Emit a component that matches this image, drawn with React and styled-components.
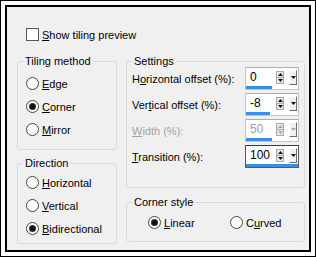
import React from 'react';
import styled, { createGlobalStyle } from 'styled-components';

const GlobalStyle = createGlobalStyle`
  html, body {
    margin: 0;
    padding: 0;
    background: #fff;
  }
  body {
    font-family: "Liberation Sans", Arial, sans-serif;
    font-size: 11px;
    color: #000;
  }
`;

const Frame = styled.div`
  width: 316px;
  height: 257px;
  box-sizing: border-box;
  border: 1px solid #000;
  padding: 4px;
  background: #fff;
`;

const Panel = styled.div`
  height: 100%;
  box-sizing: border-box;
  border: 2px solid #000;
  background: #f0f0f0;
  padding: 21px 4px 0 10px;
  display: flex;
  flex-direction: column;
`;

const CheckRow = styled.label`
  display: flex;
  align-items: center;
  gap: 3px;
  height: 13px;
  margin-left: 9px;
`;

const CheckBox = styled.span`
  width: 13px;
  height: 13px;
  box-sizing: border-box;
  border: 1px solid #555;
  background: #fff;
`;

const Columns = styled.div`
  display: grid;
  grid-template-columns: 100px 179px;
  column-gap: 9px;
  margin-top: 14px;
`;

const Column = styled.div`
  display: flex;
  flex-direction: column;
  gap: ${p => p.$gap}px;
`;

const Group = styled.fieldset`
  margin: 0;
  padding: 0;
  min-width: 0;
  border: 1px solid #d5dbe0;
  border-radius: 3px;
`;

const Legend = styled.legend`
  margin-left: 5px;
  padding: 0 2px;
  line-height: 12px;
`;

const GroupBody = styled.div`
  padding: ${p => p.$pad};
  display: ${p => (p.$inline ? 'grid' : 'block')};
  grid-template-columns: 82px 1fr;
`;

const RadioRow = styled.div`
  display: flex;
  align-items: center;
  gap: 3px;
  height: 23px;
`;

const RadioCircle = styled.span`
  width: 13px;
  height: 13px;
  box-sizing: border-box;
  border: 1px solid #444;
  border-radius: 50%;
  background: #fff;
  display: flex;
  align-items: center;
  justify-content: center;
`;

const RadioDot = styled.span`
  width: 5px;
  height: 5px;
  border-radius: 50%;
  background: #111;
  box-shadow: 0 0 0 1px #333;
`;

const SettingRow = styled.div`
  display: grid;
  grid-template-columns: 1fr 54px;
  align-items: center;
  height: 22px;
  margin-bottom: 4px;
  color: ${p => (p.$disabled ? '#a3a3a3' : '#000')};
`;

const SpinBox = styled.div`
  box-sizing: border-box;
  width: 54px;
  height: 23px;
  border: 1px solid ${p => (p.$focused ? '#5a5a5a' : '#c2c5ca')};
  border-top-color: ${p => (p.$focused ? '#3a3a3a' : '#abadb3')};
  background: #fff;
  display: flex;
  flex-direction: column;
`;

const SpinTop = styled.div`
  flex: 1;
  display: flex;
  align-items: center;
  padding: 0 1px 0 4px;
`;

const Value = styled.span`
  flex: 1;
  color: ${p => (p.$disabled ? '#a0a0a0' : '#000')};
  font-size: 12px;
`;

const Bar = styled.div`
  height: 3px;
  background: #3a8ee0;
`;

const ArrowPair = styled.span`
  width: 8px;
  height: 13px;
  box-sizing: border-box;
  border: 1px solid #a9a9a9;
  background: #e9e9e9;
  display: flex;
  flex-direction: column;
  margin-right: 5px;
`;

const ArrowHalf = styled.span`
  flex: 1;
  display: flex;
  align-items: center;
  justify-content: center;
  & + & {
    border-top: 1px solid #a9a9a9;
  }
`;

const DropButton = styled.span`
  width: 8px;
  height: 15px;
  box-sizing: border-box;
  border: 1px solid;
  border-color: #fff #6d6d6d #6d6d6d #fff;
  background: #f0f0f0;
  display: flex;
  align-items: center;
  justify-content: center;
`;

const Arrow = ({ up, color }) => (
  <svg width="5" height="3" viewBox="0 0 5 3">
    <path d={up ? 'M0 3 L2.5 0 L5 3 Z' : 'M0 0 L5 0 L2.5 3 Z'} fill={color} />
  </svg>
);

const Radio = ({ checked, children }) => (
  <RadioRow>
    <RadioCircle>{checked && <RadioDot />}</RadioCircle>
    <span>{children}</span>
  </RadioRow>
);

const Spinner = ({ value, min, max, disabled, focused }) => {
  const arrowColor = disabled ? '#a8a8a8' : '#111';
  const pct = ((value - min) / (max - min)) * 100;
  return (
    <SpinBox $focused={focused}>
      <SpinTop>
        <Value $disabled={disabled}>{value}</Value>
        <ArrowPair>
          <ArrowHalf><Arrow up color={arrowColor} /></ArrowHalf>
          <ArrowHalf><Arrow color={arrowColor} /></ArrowHalf>
        </ArrowPair>
        <DropButton><Arrow color={arrowColor} /></DropButton>
      </SpinTop>
      <Bar style={{ width: `${pct}%` }} />
    </SpinBox>
  );
};

const settings = [
  { label: <>H<u>o</u>rizontal offset (%):</>, value: 0, min: -100, max: 100 },
  { label: <>Ver<u>t</u>ical offset (%):</>, value: -8, min: -100, max: 100 },
  { label: <><u>W</u>idth (%):</>, value: 50, min: 0, max: 100, disabled: true },
  { label: <><u>T</u>ransition (%):</>, value: 100, min: 0, max: 100, focused: true },
];

export default function App() {
  return (
    <>
      <GlobalStyle />
      <Frame>
        <Panel>
          <CheckRow>
            <CheckBox />
            <span><u>S</u>how tiling preview</span>
          </CheckRow>
          <Columns>
            <Column $gap={7}>
              <Group>
                <Legend>Tiling method</Legend>
                <GroupBody $pad="5px 0 8px 8px">
                  <Radio><u>E</u>dge</Radio>
                  <Radio checked><u>C</u>orner</Radio>
                  <Radio><u>M</u>irror</Radio>
                </GroupBody>
              </Group>
              <Group>
                <Legend>Direction</Legend>
                <GroupBody $pad="2px 0 3px 8px">
                  <Radio><u>H</u>orizontal</Radio>
                  <Radio><u>V</u>ertical</Radio>
                  <Radio checked><u>B</u>idirectional</Radio>
                </GroupBody>
              </Group>
            </Column>
            <Column $gap={8}>
              <Group>
                <Legend>Settings</Legend>
                <GroupBody $pad="0 5px 16px 5px">
                  {settings.map((s, i) => (
                    <SettingRow key={i} $disabled={s.disabled}>
                      <span>{s.label}</span>
                      <Spinner {...s} />
                    </SettingRow>
                  ))}
                </GroupBody>
              </Group>
              <Group>
                <Legend>Corner style</Legend>
                <GroupBody $inline $pad="3px 0 7px 21px">
                  <Radio checked><u>L</u>inear</Radio>
                  <Radio>C<u>u</u>rved</Radio>
                </GroupBody>
              </Group>
            </Column>
          </Columns>
        </Panel>
      </Frame>
    </>
  );
}
